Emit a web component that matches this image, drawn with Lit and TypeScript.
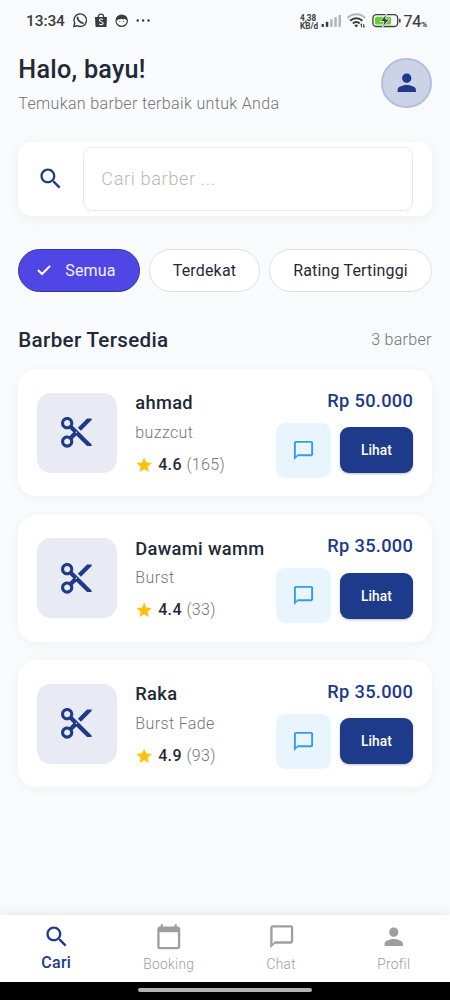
import { LitElement, html, css, svg } from "lit";
import { customElement, property } from "lit/decorators.js";

const ICONS: Record<string, string> = {
  search:
    "M15.5 14h-.79l-.28-.27C15.41 12.59 16 11.11 16 9.5 16 5.91 13.09 3 9.5 3S3 5.91 3 9.5 5.91 16 9.5 16c1.61 0 3.09-.59 4.23-1.57l.27.28v.79l5 4.99L20.49 19l-4.99-5zm-6 0C7.01 14 5 11.99 5 9.5S7.01 5 9.5 5 14 7.01 14 9.5 11.99 14 9.5 14z",
  person:
    "M12 12c2.21 0 4-1.79 4-4s-1.79-4-4-4-4 1.79-4 4 1.79 4 4 4zm0 2c-2.67 0-8 1.34-8 4v2h16v-2c0-2.66-5.33-4-8-4z",
  cut: "M9.64 7.64c.23-.5.36-1.05.36-1.64 0-2.21-1.79-4-4-4S2 3.79 2 6s1.79 4 4 4c.59 0 1.14-.13 1.64-.36L10 12l-2.36 2.36C7.14 14.13 6.59 14 6 14c-2.21 0-4 1.79-4 4s1.79 4 4 4 4-1.79 4-4c0-.59-.13-1.14-.36-1.64L12 14l7 7h3v-1L9.64 7.64zM6 8c-1.1 0-2-.89-2-2s.9-2 2-2 2 .89 2 2-.9 2-2 2zm0 12c-1.1 0-2-.89-2-2s.9-2 2-2 2 .89 2 2-.9 2-2 2zm6-7.5c-.28 0-.5-.22-.5-.5s.22-.5.5-.5.5.22.5.5-.22.5-.5.5zM19 3l-6 6 2 2 7-7V3z",
  chat: "M20 2H4c-1.1 0-2 .9-2 2v18l4-4h14c1.1 0 2-.9 2-2V4c0-1.1-.9-2-2-2zm0 14H6l-2 2V4h16v12z",
  calendar:
    "M20 3h-1V1h-2v2H7V1H5v2H4c-1.1 0-2 .9-2 2v16c0 1.1.9 2 2 2h16c1.1 0 2-.9 2-2V5c0-1.1-.9-2-2-2zm0 18H4V8h16v13z",
  star: "M12 17.27L18.18 21l-1.64-7.03L22 9.24l-7.19-.61L12 2 9.19 8.63 2 9.24l5.46 4.73L5.82 21z",
};

@customElement("app-icon")
export class AppIcon extends LitElement {
  @property() name = "search";

  static styles = css`
    :host {
      display: block;
      flex: none;
      width: 27.5px;
      height: 27.5px;
    }
    .glyph {
      display: block;
      width: 100%;
      height: 100%;
      fill: currentColor;
    }
  `;

  render() {
    return html`<svg class="glyph" viewBox="0 0 24 24">${svg`<path d=${ICONS[this.name]}></path>`}</svg>`;
  }
}

@customElement("status-bar")
export class StatusBar extends LitElement {
  static styles = css`
    :host {
      display: flex;
      justify-content: space-between;
      align-items: center;
      box-sizing: border-box;
      height: 42px;
      padding: 0 23px 0 26px;
      color: #3c3c3c;
    }
    .left,
    .right {
      display: flex;
      align-items: center;
    }
    .time {
      font-size: 15.5px;
      font-weight: 500;
      letter-spacing: -0.1px;
      width: 46px;
    }
    .apps {
      display: block;
      width: 80px;
      height: 18px;
    }
    .rate {
      font-size: 8.2px;
      line-height: 8px;
      font-weight: 700;
      width: 20px;
      white-space: nowrap;
      padding-top: 1px;
    }
    .signals {
      display: block;
      width: 82px;
      height: 18px;
    }
    .percent {
      font-size: 16px;
      font-weight: 400;
      letter-spacing: -0.2px;
      margin-left: 1.5px;
      -webkit-text-stroke: 0.2px #3c3c3c;
    }
    .unit {
      font-size: 8px;
      font-weight: 400;
      letter-spacing: 0;
    }
  `;

  render() {
    return html`
      <div class="left">
        <span class="time">13:34</span>
        <svg class="apps" viewBox="72 12 80 18">
          <g fill="none" stroke="#3c3c3c" stroke-linecap="round">
            <path d="M73.8 26.6l.9-3.3a6.3 6.3 0 1 1 2.4 2.4z" stroke-width="1.4" stroke-linejoin="round" />
            <path d="M77.7 17.5c-.8 1.8 2.4 5.6 5.2 5.6" stroke-width="1.9" />
          </g>
          <path d="M95 17h12l-.5 9.2q-.1.9-1 .9h-9q-.9 0-1-.9z" fill="#3c3c3c" />
          <path d="M98.2 17.2c0-4 5.6-4 5.6 0" fill="none" stroke="#3c3c3c" stroke-width="1.2" />
          <path d="M103 19.7c-1.2-1.1-3.6-1-3.6.5 0 1.7 3.8 1.2 3.8 3.1 0 1.6-2.7 1.7-4 .5" fill="none" stroke="#f8fafc" stroke-width="1.1" />
          <circle cx="121.7" cy="20.7" r="5.7" fill="none" stroke="#3c3c3c" stroke-width="1.2" />
          <path d="M116.3 20c.3-6.7 10.5-6.7 10.8 0l-1.5-.3-.9-1.2-1.2.9-2-.6-1.8.8-1-.6-.8 1.3z" fill="#3c3c3c" />
          <circle cx="119.8" cy="21.5" r=".6" fill="#3c3c3c" />
          <circle cx="123.7" cy="21.5" r=".6" fill="#3c3c3c" />
          <g fill="#3c3c3c">
            <circle cx="137.7" cy="20.5" r="1.25" />
            <circle cx="143.1" cy="20.5" r="1.25" />
            <circle cx="148.5" cy="20.5" r="1.25" />
          </g>
        </svg>
      </div>
      <div class="right">
        <div class="rate"><div>4,38</div><div>KB/d</div></div>
        <svg class="signals" viewBox="319.5 12 82 18">
          <g fill="#3c3c3c">
            <rect x="321" y="24" width="2.5" height="3" rx=".8" />
            <rect x="325.3" y="21.8" width="2.5" height="5.2" rx=".8" />
          </g>
          <g fill="#b4b5b7">
            <rect x="329.6" y="19.3" width="2.5" height="7.7" rx=".8" />
            <rect x="333.8" y="17" width="2.5" height="10" rx=".8" />
            <rect x="338" y="14.8" width="2.5" height="12.2" rx=".8" />
          </g>
          <g fill="none" stroke-width="2">
            <path d="M347 18a12.4 12.4 0 0 1 17.6 0" stroke="#b4b5b7" />
            <path d="M349.7 20.8a8.6 8.6 0 0 1 12.2 0" stroke="#3c3c3c" />
            <path d="M352.4 23.5a4.8 4.8 0 0 1 6.8 0" stroke="#3c3c3c" />
          </g>
          <path d="M353.9 25.3q1.9-1.6 3.8 0l-1.9 2.2z" fill="#3c3c3c" />
          <path d="M361 27.3v-3.4m-1.1 1l1.1-1.1M363.2 24v3.4m1.1-1l-1.1 1.1" fill="none" stroke="#3c3c3c" stroke-width="1" />
          <rect x="372.4" y="14.7" width="24.8" height="11.8" rx="3.6" fill="#f8fafc" stroke="#3c3c3c" stroke-width="1.3" />
          <rect x="374.5" y="16.7" width="16" height="7.8" rx="1.5" fill="#5fd02c" />
          <rect x="398.6" y="18.7" width="1.5" height="4" rx=".7" fill="#3c3c3c" />
          <path d="M386.2 13.5l-6.5 8h3.8l-1.6 6 7.1-8.5h-4z" fill="#3c3c3c" stroke="#f8fafc" stroke-width=".8" />
        </svg>
        <span class="percent">74<span class="unit">%</span></span>
      </div>
    `;
  }
}

@customElement("barber-card")
export class BarberCard extends LitElement {
  @property() name = "";
  @property() service = "";
  @property() rating = "";
  @property() reviews = "";
  @property() price = "";

  static styles = css`
    :host {
      display: block;
    }
    .card {
      display: flex;
      box-sizing: border-box;
      height: 127px;
      padding: 0 18.5px;
      border-radius: 18px;
      background: #fff;
      box-shadow: 0 2px 12px rgba(0, 0, 0, 0.045);
    }
    .thumb {
      display: grid;
      place-items: center;
      flex: none;
      width: 80px;
      height: 80px;
      margin-top: 23.5px;
      border-radius: 14px;
      background: #e8ebf4;
      color: #1e3a8a;
    }
    .scissors {
      width: 36.7px;
      height: 36.7px;
    }
    .info {
      flex: 1;
      min-width: 0;
      padding: 22px 0 0 18.5px;
      white-space: nowrap;
    }
    .name {
      font-size: 18.3px;
      line-height: 24px;
      font-weight: 500;
      letter-spacing: 0.32px;
      color: #1f2937;
    }
    .service {
      margin-top: 7.5px;
      font-size: 16px;
      line-height: 20px;
      font-weight: 300;
      letter-spacing: 0.38px;
      color: #757575;
    }
    .score {
      display: flex;
      align-items: center;
      margin-top: 12px;
      font-size: 16px;
      line-height: 20px;
      letter-spacing: 0.33px;
    }
    .star {
      width: 18.3px;
      height: 18.3px;
      color: #ffc107;
    }
    .value {
      margin-left: 4.6px;
      font-weight: 500;
      color: #1f2937;
    }
    .reviews {
      margin-left: 4.6px;
      font-weight: 300;
      color: #757575;
    }
    .side {
      display: flex;
      flex-direction: column;
      align-items: flex-end;
      flex: none;
      padding-top: 19.5px;
    }
    .price {
      font-size: 18.3px;
      line-height: 24px;
      font-weight: 500;
      letter-spacing: 0.28px;
      color: #1e3a8a;
    }
    .actions {
      display: flex;
      align-items: center;
      gap: 9px;
      margin-top: 10px;
    }
    .message {
      display: grid;
      place-items: center;
      width: 55px;
      height: 55px;
      border-radius: 9px;
      background: #e8f4fe;
      color: #369ae6;
    }
    .bubble {
      width: 23px;
      height: 23px;
    }
    .view {
      display: grid;
      place-items: center;
      width: 73.5px;
      height: 46px;
      border-radius: 9px;
      background: #1e3a8a;
      box-shadow: 0 1px 2.5px rgba(0, 0, 0, 0.26);
      color: #fff;
      font-size: 13.75px;
      font-weight: 500;
      letter-spacing: 0.11px;
    }
  `;

  render() {
    return html`
      <article class="card">
        <div class="thumb"><app-icon class="scissors" name="cut"></app-icon></div>
        <div class="info">
          <div class="name">${this.name}</div>
          <div class="service">${this.service}</div>
          <div class="score">
            <app-icon class="star" name="star"></app-icon>
            <span class="value">${this.rating}</span>
            <span class="reviews">(${this.reviews})</span>
          </div>
        </div>
        <div class="side">
          <div class="price">${this.price}</div>
          <div class="actions">
            <div class="message"><app-icon class="bubble" name="chat"></app-icon></div>
            <div class="view">Lihat</div>
          </div>
        </div>
      </article>
    `;
  }
}

const BARBERS = [
  { name: "ahmad", service: "buzzcut", rating: "4.6", reviews: "165", price: "Rp 50.000" },
  { name: "Dawami wamm", service: "Burst", rating: "4.4", reviews: "33", price: "Rp 35.000" },
  { name: "Raka", service: "Burst Fade", rating: "4.9", reviews: "93", price: "Rp 35.000" },
];

const TABS = [
  { label: "Cari", icon: "search", active: true },
  { label: "Booking", icon: "calendar", active: false },
  { label: "Chat", icon: "chat", active: false },
  { label: "Profil", icon: "person", active: false },
];

@customElement("app-root")
export class AppRoot extends LitElement {
  static styles = css`
    :host {
      display: flex;
      flex-direction: column;
      width: 450px;
      height: 1000px;
      overflow: hidden;
      background: #f8fafc;
      font-family: Roboto, sans-serif;
    }
    .content {
      flex: 1;
      min-height: 0;
      padding: 12px 18.3px 0;
    }
    .header {
      display: flex;
      justify-content: space-between;
      height: 88px;
    }
    .title {
      margin-top: 1px;
      font-size: 25.2px;
      line-height: 30px;
      font-weight: 500;
      letter-spacing: 0.26px;
      color: #1f2937;
    }
    .subtitle {
      margin-top: 8.5px;
      font-size: 16px;
      line-height: 20px;
      font-weight: 300;
      letter-spacing: 0.35px;
      color: #757575;
    }
    .avatar {
      display: grid;
      place-items: center;
      box-sizing: border-box;
      width: 50.4px;
      height: 50.4px;
      margin-top: 4px;
      border: 2px solid #b5bfdb;
      border-radius: 50%;
      background: #ccd3e6;
      color: #1e3a8a;
    }
    .search {
      display: flex;
      align-items: center;
      box-sizing: border-box;
      height: 73.5px;
      padding: 0 18.5px 0 18.3px;
      border-radius: 14px;
      background: #fff;
      box-shadow: 0 2px 14px rgba(0, 0, 0, 0.05);
      color: #1e3a8a;
    }
    .field {
      flex: 1;
      box-sizing: border-box;
      height: 64px;
      margin-left: 18.5px;
      padding-left: 17.7px;
      border: 1px solid #e8e9ea;
      border-radius: 9px;
      font-size: 18.3px;
      line-height: 61px;
      font-weight: 300;
      letter-spacing: 0.57px;
      color: #b8b8b8;
    }
    .chips {
      display: flex;
      gap: 9.2px;
      margin-top: 33px;
      white-space: nowrap;
    }
    .chip {
      display: flex;
      align-items: center;
      justify-content: center;
      box-sizing: border-box;
      height: 43.7px;
      flex: none;
      border: 1px solid #e0e0e0;
      border-radius: 22px;
      background: #fff;
      font-size: 16px;
      letter-spacing: 0.16px;
      color: #1f2937;
    }
    .chip-all {
      width: 121.4px;
      padding-right: 5px;
      border-color: #2b3f92;
      background: #4f46e5;
      color: #f2f1ff;
      gap: 14px;
    }
    .chip-near {
      width: 111.2px;
    }
    .chip-top {
      width: 162.6px;
    }
    .check {
      width: 14px;
      height: 12px;
      fill: none;
      stroke: #fff;
      stroke-width: 2;
    }
    .section {
      display: flex;
      justify-content: space-between;
      margin-top: 35.3px;
      line-height: 26px;
    }
    .section-title {
      font-size: 20.6px;
      font-weight: 500;
      letter-spacing: 0.32px;
      color: #1f2937;
    }
    .count {
      font-size: 16px;
      font-weight: 300;
      letter-spacing: 0.3px;
      color: #757575;
    }
    .list {
      display: grid;
      gap: 18.5px;
      margin-top: 15.8px;
    }
    .nav {
      display: grid;
      grid-template-columns: repeat(4, 1fr);
      flex: none;
      height: 66.5px;
      background: #fff;
      box-shadow: 0 -2px 10px rgba(0, 0, 0, 0.08);
    }
    .tab {
      display: flex;
      flex-direction: column;
      align-items: center;
      padding-top: 8px;
      color: #9e9e9e;
    }
    .label {
      margin-top: 3.5px;
      font-size: 13.75px;
      line-height: 20px;
      font-weight: 300;
      letter-spacing: 0.28px;
    }
    .active {
      color: #1e3a8a;
    }
    .active .label {
      margin-top: 2.3px;
      font-size: 16px;
      font-weight: 500;
    }
    .system {
      display: flex;
      justify-content: center;
      box-sizing: border-box;
      flex: none;
      height: 18.5px;
      padding-top: 6px;
      background: #000;
    }
    .handle {
      width: 174px;
      height: 4.5px;
      border-radius: 2.25px;
      background: #b3b3b3;
    }
  `;

  render() {
    return html`
      <status-bar></status-bar>
      <main class="content">
        <header class="header">
          <div>
            <div class="title">Halo, bayu!</div>
            <div class="subtitle">Temukan barber terbaik untuk Anda</div>
          </div>
          <div class="avatar"><app-icon name="person"></app-icon></div>
        </header>
        <div class="search">
          <app-icon name="search"></app-icon>
          <div class="field">Cari barber ...</div>
        </div>
        <div class="chips">
          <div class="chip chip-all">
            <svg class="check" viewBox="0 0 14 12"><path d="M1 6l4 4 8-8"></path></svg>
            <span>Semua</span>
          </div>
          <div class="chip chip-near">Terdekat</div>
          <div class="chip chip-top">Rating Tertinggi</div>
        </div>
        <div class="section">
          <div class="section-title">Barber Tersedia</div>
          <div class="count">3 barber</div>
        </div>
        <div class="list">
          ${BARBERS.map(
            (b) => html`<barber-card
              .name=${b.name}
              .service=${b.service}
              .rating=${b.rating}
              .reviews=${b.reviews}
              .price=${b.price}
            ></barber-card>`
          )}
        </div>
      </main>
      <nav class="nav">
        ${TABS.map(
          (t) => html`<div class="tab ${t.active ? "active" : ""}">
            <app-icon name=${t.icon}></app-icon>
            <div class="label">${t.label}</div>
          </div>`
        )}
      </nav>
      <div class="system"><div class="handle"></div></div>
    `;
  }
}
